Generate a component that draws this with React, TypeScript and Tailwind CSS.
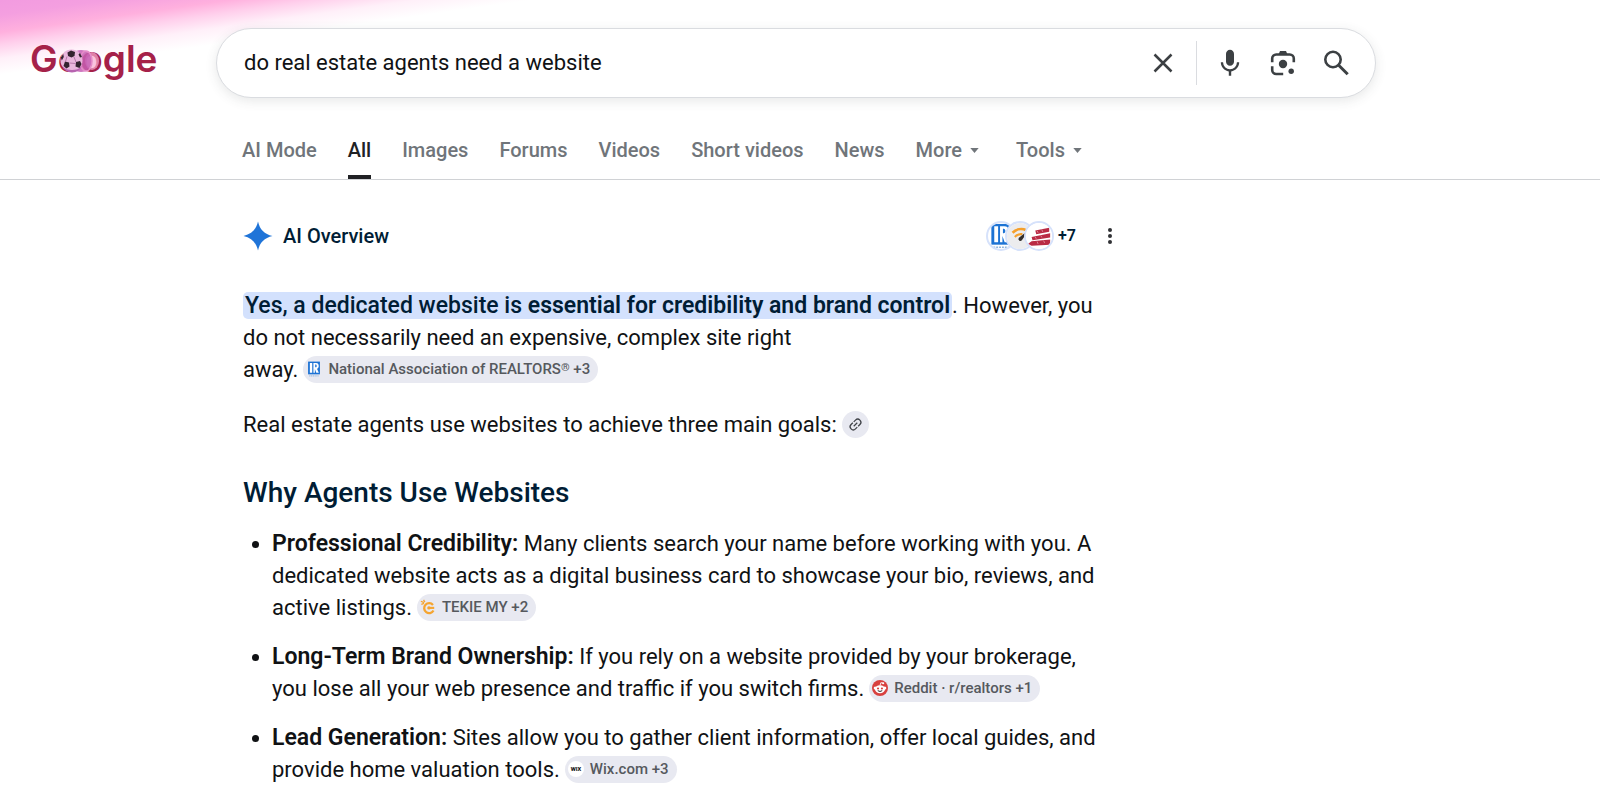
import React from "react";

function Logo() {
  return (
    <svg viewBox="0 0 130 56" className="block h-14 w-[130px]" role="img" aria-label="Google">
      <text x="-1" y="38" fontFamily="Inter, sans-serif" fontSize="37" fontWeight="600" fill="#a52149">
        Google
      </text>
      <ellipse cx="61" cy="27" rx="7" ry="9" fill="#f7a9d2" opacity=".7" />
      <ellipse cx="50" cy="27" rx="11" ry="11" fill="#c65fb4" opacity=".85" />
      <ellipse cx="55" cy="27" rx="6" ry="10" fill="none" stroke="#e58bc8" strokeWidth="1.5" />
      <circle cx="40.500" cy="26.500" r="11" fill="#e9b6dc" />
      <path d="M31 32a11 11 0 0 0 20 0c-3 3-6 4-10 4s-7-1-10-4z" fill="#b763b0" />
      <path d="M40 16.500l4 1.500-.500 4-3 1.500-3.500-1.500-.500-3.500z" fill="#33232f" />
      <path d="M34 27.500l4 1 .500 4-3 2-3-2.500z" fill="#33232f" />
      <path d="M45 28l4-1 1.500 3-2 4-4-1.500z" fill="#33232f" />
      <path d="M29.800 23.500l2.500-3.500.500 3-2 3.500zM49 19l2 4-2 .500-1.500-3z" fill="#33232f" />
      <path d="M38.500 29l6 .500M43 23l2 5M36 22.500l-1.500 5" stroke="#a8689c" strokeWidth=".8" fill="none" />
    </svg>
  );
}

function RealtorMark() {
  return (
    <svg viewBox="1.500 0.500 25 27" className="h-full w-full" aria-hidden="true">
      <rect x="4" y="1.500" width="20" height="21.500" fill="#1d73d4" />
      <path d="M7 4h4v16.500H7zM13 4h4.500c3 0 4.500 2 4.500 4.800 0 2.500-1.200 4-3 4.700l3.200 7h-4.400l-2.300-6.500v6.500H13z" fill="#fff" />
      <path d="M16 6.500h.8c1.200 0 1.700 1 1.700 2.400s-.5 2.300-1.700 2.300H16z" fill="#1d73d4" />
      <path d="M6 25.700h16" stroke="#8fb4dc" strokeWidth="1.600" strokeDasharray="2 1" />
    </svg>
  );
}

function GaugeMark() {
  return (
    <svg viewBox="0 0 28 28" className="h-full w-full" aria-hidden="true">
      <rect width="28" height="28" fill="#ececee" />
      <path d="M6 10.500a13 13 0 0 1 15-2.500" stroke="#f5a02c" strokeWidth="2.800" fill="none" />
      <path d="M8.500 15a9 9 0 0 1 8-3" stroke="#f5a02c" strokeWidth="2.400" fill="none" />
      <path d="M24 7L16 18.500a2 2 0 0 1-3.200-2.600z" fill="#33302e" />
    </svg>
  );
}

function StripesMark() {
  return (
    <svg viewBox="0 0 28 28" className="h-full w-full" aria-hidden="true">
      <rect width="28" height="28" fill="#fff" />
      <path d="M10 8l15-3v4.300l-14 2.700zM6 15l20-4v4.500L7 18.700zM2 22.500l4-2.800 20-2v5.800l-20 1z" fill="#b92b45" />
      <path d="M12 8.500l1 2M17 7l1 2.500M10 15l1 2M16 13.500l1 2M12 20l1 2.500M19 19l1 2.500" stroke="#e7a2af" strokeWidth=".8" />
    </svg>
  );
}

function TekieMark() {
  return (
    <svg viewBox="0 0 18 18" className="h-full w-full" aria-hidden="true">
      <path d="M14.600 6.700A5.600 5.600 0 1 0 15.200 13" fill="none" stroke="#f5a531" strokeWidth="2.600" />
      <path d="M10 10h6" stroke="#f5a531" strokeWidth="2.400" />
      <path d="M1 2.500l3.500 1.500M4 1l1.500 2.500M1.500 6l3-1" stroke="#f5a531" strokeWidth="1.400" />
      <circle cx="10" cy="10" r="1.900" fill="#f5a531" />
    </svg>
  );
}

function RedditMark() {
  return (
    <svg viewBox="0 0 18 18" className="h-full w-full" aria-hidden="true">
      <circle cx="9" cy="9" r="9" fill="#d8413f" />
      <circle cx="3.600" cy="9" r="1.700" fill="#fff" />
      <circle cx="14.400" cy="9" r="1.700" fill="#fff" />
      <ellipse cx="9" cy="10.300" rx="5.600" ry="4.500" fill="#fff" />
      <path d="M9 6l1-3 2.500.5" stroke="#fff" strokeWidth="1" fill="none" />
      <circle cx="12.600" cy="3.700" r="1.200" fill="#fff" />
      <circle cx="6.800" cy="9.500" r="1.200" fill="#d8413f" />
      <circle cx="11.200" cy="9.500" r="1.200" fill="#d8413f" />
      <path d="M6.500 12q2.500 1.800 5 0" stroke="#222" strokeWidth="1.100" fill="none" />
    </svg>
  );
}

function WixMark() {
  return (
    <svg viewBox="0 0 18 18" className="h-full w-full" aria-hidden="true">
      <circle cx="9" cy="9" r="9" fill="#fff" />
      <text x="9" y="11.200" textAnchor="middle" fontFamily="Roboto, sans-serif" fontSize="6.500" fontWeight="800" fill="#111">
        WIX
      </text>
    </svg>
  );
}

function Chip({ icon, label }: { icon: React.ReactNode; label: React.ReactNode }) {
  return (
    <button type="button" className="-my-1 ml-[5px] inline-flex h-[27px] items-center gap-1.5 rounded-full bg-[#e8e9f1] pr-2 pl-[3px] align-baseline text-[15px] leading-none font-medium text-[#56595e]">
      <span className="size-4">{icon}</span>
      <span>{label}</span>
    </button>
  );
}

function Avatar({ children }: { children: React.ReactNode }) {
  return <span className="size-[30px] overflow-hidden rounded-full border-2 border-[#d6e2fb] bg-white">{children}</span>;
}

function Caret() {
  return (
    <svg viewBox="0 0 10 6" className="h-[5px] w-[9px]" aria-hidden="true">
      <path d="M0 0h10L5 6z" fill="#70757a" />
    </svg>
  );
}

const tabs = ["AI Mode", "All", "Images", "Forums", "Videos", "Short videos", "News"];

export default function App() {
  return (
    <div className="min-h-screen bg-white font-[Roboto,sans-serif] text-[#101214]">
      <header className="border-b border-[#d0d2d5] bg-[linear-gradient(172deg,#f29be0_0px,#f49fe0_15px,#ffb0de_32px,#ffd0ec_44px,#fff0f9_58px,#ffffff_74px)] bg-no-repeat">
        <div className="flex items-start pt-7">
          <a href="#home" className="w-[216px] shrink-0 pt-1.5 pl-[31px]">
            <Logo />
          </a>
          <form
            role="search"
            onSubmit={(e) => e.preventDefault()}
            className="mr-6 flex h-[70px] w-full max-w-[1160px] items-center rounded-full border border-[#dadce0] bg-white pr-[21px] pl-[27px] shadow-[0_3px_12px_rgba(60,64,67,0.12)]"
          >
            <input
              aria-label="Search"
              defaultValue="do real estate agents need a website"
              className="min-w-0 flex-1 bg-transparent text-[22px] leading-8 outline-none"
            />
            <button type="button" aria-label="Clear" className="grid size-9 place-items-center">
              <svg viewBox="0 0 32 32" className="size-8" aria-hidden="true">
                <path d="M7.500 7.500l17 17M24.500 7.500l-17 17" stroke="#3c4043" strokeWidth="2.500" />
              </svg>
            </button>
            <span className="mx-[15px] h-11 w-px bg-[#dadce0]" />
            <div className="flex gap-[17px]">
              <button type="button" aria-label="Search by voice" className="grid size-9 place-items-center">
                <svg viewBox="0 0 24 24" className="size-8" fill="#3c4043" aria-hidden="true">
                  <path d="M12 14c1.660 0 3-1.340 3-3V5c0-1.660-1.340-3-3-3S9 3.340 9 5v6c0 1.660 1.340 3 3 3z" />
                  <path d="M17.200 11.500a5.200 5.200 0 0 1-10.400 0H5.100c0 3.500 2.650 6.350 6 6.800V21.500h1.800v-3.200c3.350-.450 6-3.300 6-6.800z" />
                </svg>
              </button>
              <button type="button" aria-label="Search by image" className="grid size-9 place-items-center">
                <svg viewBox="0 0 32 32" className="size-8" fill="none" aria-hidden="true">
                  <path d="M5.200 15.300v-3.800a4 4 0 0 1 4-4h13.600a4 4 0 0 1 4 4v3.800M5.200 19.200V23a4 4 0 0 0 4 4h7" stroke="#3c4043" strokeWidth="2.600" />
                  <path d="M11.500 7.500L13 4h6l1.500 3.500z" fill="#3c4043" />
                  <circle cx="16" cy="17" r="4.200" fill="#3c4043" />
                  <circle cx="24.200" cy="24.200" r="2.700" fill="#3c4043" />
                </svg>
              </button>
              <button type="submit" aria-label="Submit search" className="grid size-9 place-items-center">
                <svg viewBox="0 0 32 32" className="size-8" fill="none" stroke="#3c4043" strokeWidth="2.600" aria-hidden="true">
                  <circle cx="13" cy="12.500" r="7.700" />
                  <path d="M18.700 18.200l9 9" strokeWidth="3" />
                </svg>
              </button>
            </div>
          </form>
        </div>
        <nav aria-label="Search filters" className="mt-[34px] flex gap-[31px] pl-[242px] text-[20px] leading-9 font-medium whitespace-nowrap text-[#70757a]">
          {tabs.map((t) => (
            <a
              key={t}
              href={`#${t}`}
              className={t === "All" ? "border-b-4 border-[#202124] pb-[7px] text-[#202124]" : "border-b-4 border-transparent pb-[7px]"}
            >
              {t}
            </a>
          ))}
          <button type="button" className="flex items-center gap-2 pr-1.5 pb-[11px]">
            More <Caret />
          </button>
          <button type="button" className="flex items-center gap-2 pb-[11px]">
            Tools <Caret />
          </button>
        </nav>
      </header>

      <main className="ml-[243px] max-w-[877px] pt-9 pb-6 text-[22px] leading-8">
        <div className="flex h-10 items-center text-[#001d35]">
          <svg viewBox="0 0 30 30" className="mr-2.5 size-[30px]" aria-hidden="true">
            <path d="M15 0.500C16.800 8.500 21.500 13.200 29.500 15 21.500 16.800 16.800 21.500 15 29.500 13.200 21.500 8.500 16.800 0.500 15 8.500 13.200 13.200 8.500 15 0.500z" fill="#1f74d8" />
          </svg>
          <h1 className="text-[20px] font-medium">AI Overview</h1>
          <button type="button" aria-label="Show all sources" className="ml-auto flex items-center">
            <span className="flex -space-x-[11px]">
              <Avatar>
                <RealtorMark />
              </Avatar>
              <Avatar>
                <GaugeMark />
              </Avatar>
              <Avatar>
                <StripesMark />
              </Avatar>
            </span>
            <span className="ml-1 text-[16px] font-semibold">+7</span>
          </button>
          <button type="button" aria-label="About this result" className="ml-6 grid size-5 place-items-center">
            <svg viewBox="0 0 6 18" className="h-[18px] w-1.5" fill="#303134" aria-hidden="true">
              <circle cx="3" cy="3" r="2" />
              <circle cx="3" cy="9" r="2" />
              <circle cx="3" cy="15" r="2" />
            </svg>
          </button>
        </div>

        <div className="pr-4">
          <p className="mt-[34px]">
            <mark className="rounded-[5px] bg-[#d3e1fd] px-0.5 text-[23px] font-medium text-[#001d35]">
              Yes, a dedicated website is <b className="font-semibold">essential for credibility and brand control</b>
            </mark>
            . However, you do not necessarily need an expensive, complex site right{" "}
            <span className="whitespace-nowrap">
              away.
              <Chip
                icon={<RealtorMark />}
                label={
                  <>
                    National Association of REALTORS<span className="align-[3px] text-[11px]">®</span> +3
                  </>
                }
              />
            </span>
          </p>

          <p className="mt-[23px]">
            Real estate agents use websites to achieve three main goals:
            <button type="button" aria-label="Related links" className="-my-1 ml-[5px] inline-grid size-[27px] place-items-center rounded-full bg-[#e8e9f1] align-baseline">
              <svg viewBox="0 0 24 24" className="size-[15px] -rotate-45" fill="none" stroke="#3f4247" strokeWidth="2" aria-hidden="true">
                <path d="M11 7H7a5 5 0 0 0 0 10h4M13 7h4a5 5 0 0 1 0 10h-4M8 12h8" />
              </svg>
            </button>
          </p>

          <h2 className="mt-[34px] text-[28px] leading-9 font-medium text-[#001d35]">Why Agents Use Websites</h2>

          <ul className="mt-[17px] flex list-disc flex-col gap-[17px] pl-[29px]">
            <li>
              <b className="text-[23px] font-semibold">Professional Credibility:</b> Many clients search your name before working with you. A
              dedicated website acts as a digital business card to showcase your bio, reviews, and active{" "}
              <span className="whitespace-nowrap">
                listings.
                <Chip icon={<TekieMark />} label="TEKIE MY +2" />
              </span>
            </li>
            <li>
              <b className="text-[23px] font-semibold">Long-Term Brand Ownership:</b> If you rely on a website provided by your brokerage, you
              lose all your web presence and traffic if you switch{" "}
              <span className="whitespace-nowrap">
                firms.
                <Chip icon={<RedditMark />} label="Reddit · r/realtors +1" />
              </span>
            </li>
            <li>
              <b className="text-[23px] font-semibold">Lead Generation:</b> Sites allow you to gather client information, offer local guides, and
              provide home valuation{" "}
              <span className="whitespace-nowrap">
                tools.
                <Chip icon={<WixMark />} label="Wix.com +3" />
              </span>
            </li>
          </ul>
        </div>
      </main>
    </div>
  );
}
